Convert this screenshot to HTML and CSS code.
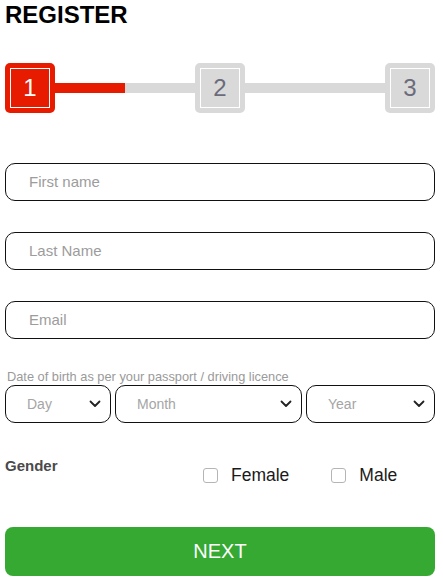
FILE: index.html
```html
<!DOCTYPE html>
<html lang="en">
<head>
<meta charset="utf-8">
<title>Register</title>
<link rel="stylesheet" href="styles.css">
</head>
<body>
<div class="page">
  <h1 class="title">REGISTER</h1>

  <div class="stepper">
    <div class="step step-active"><span class="step-inner">1</span></div>
    <div class="track"><div class="track-fill" style="width:50%"></div></div>
    <div class="step"><span class="step-inner">2</span></div>
    <div class="track"></div>
    <div class="step"><span class="step-inner">3</span></div>
  </div>

  <form class="form">
    <div class="field"><span class="placeholder">First name</span></div>
    <div class="field"><span class="placeholder">Last Name</span></div>
    <div class="field"><span class="placeholder">Email</span></div>

    <div class="dob">
      <div class="dob-label">Date of birth as per your passport / driving licence</div>
      <div class="dob-row">
        <div class="select"><span class="select-text">Day</span><svg class="chev" width="12" height="8" viewBox="0 0 12 8"><path d="M1.5 1.5 L6 6 L10.5 1.5" fill="none" stroke="#222" stroke-width="1.8" stroke-linecap="round" stroke-linejoin="round"/></svg></div>
        <div class="select"><span class="select-text">Month</span><svg class="chev" width="12" height="8" viewBox="0 0 12 8"><path d="M1.5 1.5 L6 6 L10.5 1.5" fill="none" stroke="#222" stroke-width="1.8" stroke-linecap="round" stroke-linejoin="round"/></svg></div>
        <div class="select"><span class="select-text">Year</span><svg class="chev" width="12" height="8" viewBox="0 0 12 8"><path d="M1.5 1.5 L6 6 L10.5 1.5" fill="none" stroke="#222" stroke-width="1.8" stroke-linecap="round" stroke-linejoin="round"/></svg></div>
      </div>
    </div>

    <div class="gender">
      <div class="gender-label">Gender</div>
      <div class="gender-options">
        <label class="option option-female"><span class="box"></span><span>Female</span></label>
        <label class="option"><span class="box"></span><span>Male</span></label>
      </div>
    </div>

    <div class="next">NEXT</div>
  </form>
</div>
</body>
</html>
```

FILE: styles.css
```css
* { box-sizing: border-box; }

html, body {
  margin: 0;
  padding: 0;
  background: #ffffff;
}

body {
  font-family: "Liberation Sans", Arial, sans-serif;
  color: #000;
}

.page {
  padding: 1px 8px 0 5px;
  width: 443px;
}

.title {
  margin: 0;
  font-size: 24px;
  line-height: 28px;
  font-weight: 700;
  color: #000;
}

.stepper {
  margin-top: 34px;
  display: flex;
  align-items: center;
  height: 50px;
}

.step {
  flex: 0 0 50px;
  width: 50px;
  height: 50px;
  border-radius: 5px;
  background: #d9d9d9;
  padding: 5px;
}

.step-active {
  background: #e71b00;
}

.step-inner {
  display: flex;
  align-items: center;
  justify-content: center;
  width: 100%;
  height: 100%;
  border: 1.5px solid #ffffff;
  font-size: 24px;
  color: #6b6b7c;
}

.step-active .step-inner {
  color: #ffffff;
}

.track {
  flex: 1 1 auto;
  height: 10px;
  background: #d9d9d9;
}

.track-fill {
  height: 100%;
  background: #e71b00;
}

.form {
  margin-top: 50px;
  display: flex;
  flex-direction: column;
}

.field {
  height: 38px;
  border: 1px solid #111;
  border-radius: 10px;
  padding: 0 0 1px 23px;
  display: flex;
  align-items: center;
  margin-bottom: 31px;
}

.placeholder {
  font-size: 15px;
  color: #9c9c9c;
}

.dob-label {
  font-size: 12.8px;
  line-height: 14px;
  color: #9a9a9a;
  padding-left: 2px;
  margin-bottom: 1px;
  white-space: nowrap;
}

.dob-row {
  display: grid;
  grid-template-columns: 106px 187px 1fr;
  column-gap: 4px;
}

.select {
  height: 38px;
  border: 1px solid #111;
  border-radius: 10px;
  display: flex;
  align-items: center;
  justify-content: space-between;
  padding: 0 9px 1px 21px;
}

.select-text {
  font-size: 14px;
  color: #a5a5a5;
}

.chev {
  display: block;
}

.gender {
  margin-top: 34px;
  display: flex;
  align-items: flex-start;
}

.gender-label {
  flex: 0 0 198px;
  font-size: 15px;
  line-height: 17px;
  font-weight: 700;
  color: #4a4a4a;
}

.gender-options {
  margin-top: 8px;
  display: flex;
  align-items: center;
}

.option {
  display: flex;
  align-items: center;
  gap: 13px;
  font-size: 17.5px;
  line-height: 20px;
  color: #1a1a1a;
}

.option-female {
  margin-right: 42px;
}

.box {
  width: 15px;
  height: 15px;
  border: 1px solid #b5b5b5;
  border-radius: 3px;
  background: #fff;
}

.next {
  margin-top: 42px;
  height: 49px;
  border-radius: 8px;
  background: #35a932;
  color: #ffffff;
  font-size: 20px;
  display: flex;
  align-items: center;
  justify-content: center;
}
```
